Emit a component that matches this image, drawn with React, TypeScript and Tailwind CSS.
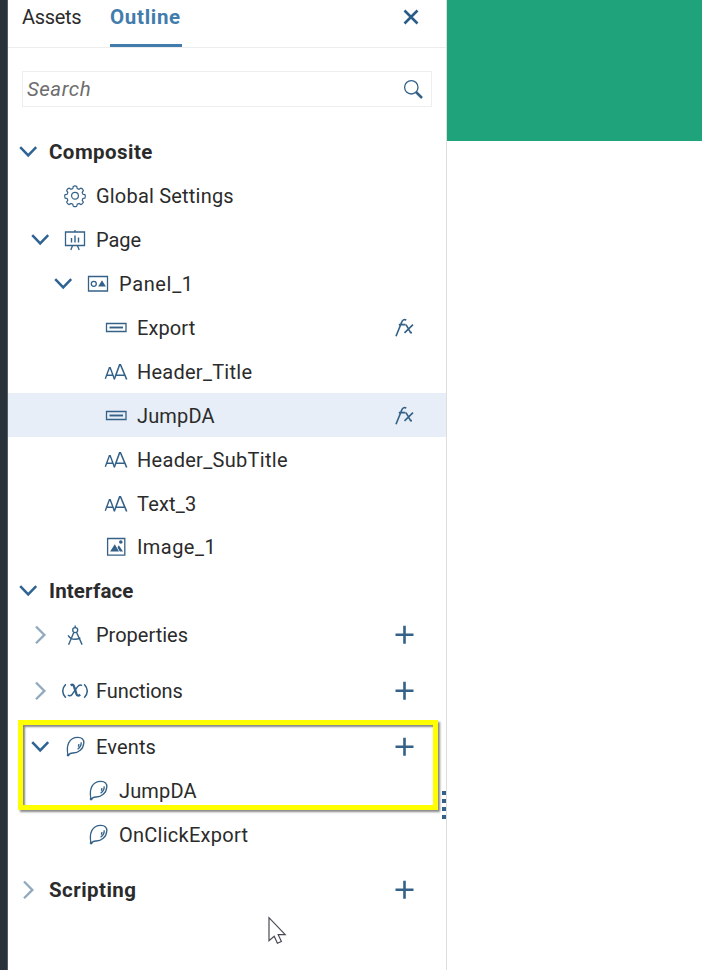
import type { ReactNode } from "react";

type IconName = "gear" | "page" | "panel" | "button" | "text" | "image" | "compass" | "function" | "event";

type Row = {
  label: string;
  indent: string;
  chevron?: "open" | "closed";
  icon?: IconName;
  bold?: boolean;
  action?: "fx" | "add";
  selected?: boolean;
  tracking?: string;
  gapAfter?: boolean;
};

const rows: Row[] = [
  { label: "Composite", indent: "pl-[11px]", chevron: "open", bold: true, tracking: "tracking-[0.45px]" },
  { label: "Global Settings", indent: "pl-[23px]", icon: "gear", tracking: "tracking-[0.2px]" },
  { label: "Page", indent: "pl-[23px]", chevron: "open", icon: "page" },
  { label: "Panel_1", indent: "pl-[46px]", chevron: "open", icon: "panel", tracking: "tracking-[0.65px]" },
  { label: "Export", indent: "pl-[64px]", icon: "button", action: "fx", tracking: "tracking-[0.1px]" },
  { label: "Header_Title", indent: "pl-[64px]", icon: "text", tracking: "tracking-[0.25px]" },
  { label: "JumpDA", indent: "pl-[64px]", icon: "button", action: "fx", selected: true, tracking: "tracking-[0.15px]" },
  { label: "Header_SubTitle", indent: "pl-[64px]", icon: "text", tracking: "tracking-[0.3px]" },
  { label: "Text_3", indent: "pl-[64px]", icon: "text", tracking: "tracking-[0.2px]" },
  { label: "Image_1", indent: "pl-[64px]", icon: "image", tracking: "tracking-[0.45px]" },
  { label: "Interface", indent: "pl-[11px]", chevron: "open", bold: true, tracking: "tracking-[0.15px]" },
  { label: "Properties", indent: "pl-[23px]", chevron: "closed", icon: "compass", action: "add", gapAfter: true },
  { label: "Functions", indent: "pl-[23px]", chevron: "closed", icon: "function", action: "add", gapAfter: true, tracking: "tracking-[-0.08px]" },
  { label: "Events", indent: "pl-[23px]", chevron: "open", icon: "event", action: "add", tracking: "tracking-[0.15px]" },
  { label: "JumpDA", indent: "pl-[46px]", icon: "event", tracking: "tracking-[0.15px]" },
  { label: "OnClickExport", indent: "pl-[46px]", icon: "event", gapAfter: true, tracking: "tracking-[0.26px]" },
  { label: "Scripting", indent: "pl-[11px]", chevron: "closed", bold: true, action: "add", tracking: "tracking-[0.45px]" },
];

const glyphs: Record<IconName, ReactNode> = {
  gear: (
    <g transform="translate(14 13.700) scale(.92) translate(-14 -14)">
      <circle cx="14" cy="14" r="3.700" />
      <path d="M12.1 3.900q1.900-1.200 3.800 0l.5 2.300 2 .8 2-1.300q2.200.5 2.700 2.700l-1.300 2 .8 2 2.200.4q1 1.900 0 3.800l-2.200.4-.8 2 1.300 2q-.6 2.100-2.700 2.700l-2-1.300-2 .8-.5 2.200q-1.900 1-3.800 0l-.5-2.200-2-.8-2 1.300q-2.100-.6-2.700-2.700l1.300-2-.8-2-2.200-.4q-1-1.900 0-3.800l2.200-.4.8-2-1.300-2q.6-2.200 2.700-2.700l2 1.300 2-.8z" />
    </g>
  ),
  page: (
    <>
      <path d="M4.500 6h19v13.500h-19zM14 4v2M11.600 19.500 9.800 24M16.400 19.500l1.800 4.500" />
      <path d="M10.500 12v4.500M14 9.500v7M17.500 11.500v5" strokeWidth="1.400" />
    </>
  ),
  panel: (
    <>
      <path d="M4.500 6.500h19v14.500h-19z" />
      <circle cx="9.800" cy="13.800" r="2.500" />
      <path d="m18 10.200 3.900 6.300h-7.800z" fill="currentColor" stroke="none" />
    </>
  ),
  button: (
    <>
      <path d="M4.500 9.500h19.500v8H4.500z" />
      <path d="M7.500 13.500h13.500" strokeWidth="1.900" />
    </>
  ),
  text: (
    <>
      <path d="m3.300 20.700 4.100-11h.8L12.300 20.700M4.800 17.200h5.800" strokeWidth="1.400" />
      <path d="m12.200 21.500 5.400-14.700h.9L24.700 21.500M14.200 17.200h8.300" strokeWidth="1.600" />
    </>
  ),
  image: (
    <>
      <path d="M5.600 5.500h17.200v16.600h-17.200z" />
      <circle cx="18.800" cy="9" r="1.800" fill="currentColor" stroke="none" />
      <path d="m8.100 18.500 4.700-7.200 4.200 7.200zm9.700 0-2.300-4 1.300-2.200 4.200 6.200z" fill="currentColor" stroke="none" />
    </>
  ),
  compass: (
    <>
      <path d="M14.200 4.500v2.200M12.900 11.200 7.600 23.800M15.500 11.200l5.600 12.400M7.100 14.300q3.700 6.200 12.300 2.700" strokeWidth="1.400" />
      <circle cx="14.200" cy="9.100" r="2.500" />
    </>
  ),
  function: (
    <>
      <path d="M4.800 7.300q-6.200 6.700 0 13.400M23.200 7.300q6.200 6.700 0 13.400" strokeWidth="1.500" />
      <path d="M9.600 8.200q2.700-1.400 3.500 1.400l2.300 7.200q1 2.900 3.900 1" strokeWidth="2.300" />
      <path d="M21 8.600q-2.200-1.700-4.600 1.300L11.500 16.900q-2.400 2.900-4.700 1.300" strokeWidth="1.500" />
    </>
  ),
  event: (
    <>
      <path d="M7 22.200C4.900 12.500 8 4.400 16.800 4.400c4.300 0 6.300 2.200 6 5.700-.5 6-5.400 10-10.800 9.900-2.200-.1-3.300.5-5 2.200" />
      <path d="M20.200 9.300q.2 4.400-3.600 6.900M17.900 11q0 1.400-.8 2.600" />
      <circle cx="7.100" cy="22.100" r="1.400" fill="currentColor" stroke="none" />
    </>
  ),
};

function Icon({ name }: { name: IconName }) {
  return (
    <svg className="size-7 shrink-0 text-[#346187]" viewBox="0 0 28 28" fill="none" stroke="currentColor" strokeWidth="1.3">
      {glyphs[name]}
    </svg>
  );
}

function Chevron({ state }: { state: "open" | "closed" }) {
  return state === "open" ? (
    <svg className="size-5 shrink-0 text-[#2f6393]" viewBox="0 0 20 20" fill="none" stroke="currentColor" strokeWidth="2.5">
      <path d="m1.200 5.200 8 8.200 8-8.200" />
    </svg>
  ) : (
    <svg className="size-5 shrink-0 text-[#91a9be]" viewBox="0 0 20 20" fill="none" stroke="currentColor" strokeWidth="2.3">
      <path d="m5 1.500 8.400 8.400-8.400 8.400" />
    </svg>
  );
}

function TreeRow({ row }: { row: Row }) {
  return (
    <div
      className={`flex h-[43.9px] shrink-0 items-center pr-[32px] pt-[0.95px] ${row.indent} ${row.selected ? "bg-[#e7eef7]" : ""} ${row.gapAfter ? "mb-[11.9px]" : ""}`}
    >
      {row.chevron ? <Chevron state={row.chevron} /> : <span className="w-5 shrink-0" />}
      {row.icon ? (
        <span className="ml-[10.4px] mr-[6.6px] flex">
          <Icon name={row.icon} />
        </span>
      ) : (
        <span className="w-[10px]" />
      )}
      <span className={`whitespace-nowrap ${row.bold ? "text-[20.5px] leading-6 font-bold" : ""} ${row.tracking ?? ""}`}>{row.label}</span>
      {row.action === "add" && (
        <svg className="ml-auto size-5 text-[#346187]" viewBox="0 0 20 20" fill="none" stroke="currentColor" strokeWidth="2.6">
          <path d="M1.500 9.700h18M10.500.7v18" />
        </svg>
      )}
      {row.action === "fx" && (
        <svg className="ml-auto size-5 text-[#346187]" viewBox="0 0 20 20" fill="none" stroke="currentColor" strokeWidth="1.6">
          <path d="M12.300 2Q9 .500 7.600 4.400L2 18.200M4.800 6.600h6.700M12 6.600l4.600 8h1.400M19 6.600l-8.500 8.200" />
        </svg>
      )}
    </div>
  );
}

export default function App() {
  return (
    <div className="relative flex h-[970px] w-[702px] overflow-hidden bg-white font-['Roboto','Liberation_Sans',sans-serif] text-[20px] leading-6 text-[#2b2b2b]">
      <div className="w-2 shrink-0 border-r border-[#555d67] bg-[#29313b]" />
      <aside className="flex w-[439px] shrink-0 flex-col border-r border-[#dedede]">
        <header className="flex h-12 shrink-0 border-b border-[#ededed] pl-[14px] pr-[26px]">
          <span className="h-[47px] w-[88px] pt-[5px] tracking-[-0.3px]">Assets</span>
          <span className="h-[47px] w-[71.5px] border-b-[3px] border-[#427cac] pt-[5px] text-[20.5px] leading-6 font-bold tracking-[0.7px] text-[#427cac]">
            Outline
          </span>
          <svg className="ml-auto mt-2 size-[18px] text-[#2b5c88]" viewBox="0 0 18 18" fill="none" stroke="currentColor" strokeWidth="2.6">
            <path d="m2.500 2.500 13 13m0-13-13 13" />
          </svg>
        </header>
        <div className="mx-[14px] mt-[23px] flex h-[36px] shrink-0 items-center border border-[#eeeeee] pl-[4px] pr-[8px]">
          <span className="text-[20.5px] leading-6 italic tracking-[0.5px] text-[#6d6d6d]">Search</span>
          <svg className="ml-auto size-5 text-[#346187]" viewBox="0 0 20 20" fill="none" stroke="currentColor">
            <circle cx="8.300" cy="8.300" r="6.700" strokeWidth="1.3" />
            <path d="m13 13 6 6" strokeWidth="2.5" />
          </svg>
        </div>
        <nav className="mt-[23px] flex flex-col">
          {rows.map((row, i) => (
            <TreeRow key={i} row={row} />
          ))}
        </nav>
      </aside>
      <main className="flex-1">
        <div className="h-[141px] bg-[#1fa37b]" />
      </main>
      <div className="absolute left-[18px] top-[720px] h-[90px] w-[420px] border-[5px] border-[#ffff00] shadow-[2px_2px_2px_#888,inset_2px_2px_2px_#888]" />
      <div className="absolute left-[442px] top-[791px] flex flex-col gap-1">
        <i className="size-1 bg-[#346187]" />
        <i className="size-1 bg-[#346187]" />
        <i className="size-1 bg-[#346187]" />
        <i className="size-1 bg-[#346187]" />
      </div>
      <svg className="absolute left-[268px] top-[916px] h-[29px] w-[20px]" viewBox="0 0 20 29" fill="white" stroke="#4a4a55" strokeWidth="1.2">
        <path d="M1 1.700v23l5.200-4.500 3.200 7 4-1.700-3.200-6.800h7z" />
      </svg>
    </div>
  );
}
